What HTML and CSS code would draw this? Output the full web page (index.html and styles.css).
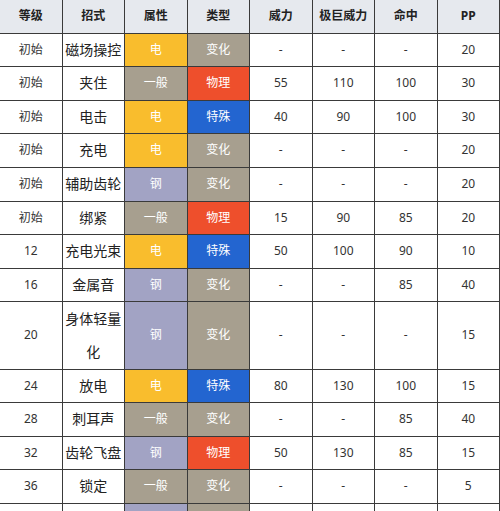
FILE: index.html
```html
<!DOCTYPE html>
<html lang="zh">
<head>
<meta charset="utf-8">
<link rel="stylesheet" href="styles.css">
</head>
<body>
<table class="moves">
  <thead>
    <tr><th>等级</th><th>招式</th><th>属性</th><th>类型</th><th>威力</th><th>极巨威力</th><th>命中</th><th>PP</th></tr>
  </thead>
  <tbody>
    <tr><td>初始</td><td class="name">磁场操控</td><td class="t-elec">电</td><td class="t-status">变化</td><td>-</td><td>-</td><td>-</td><td>20</td></tr>
    <tr><td>初始</td><td class="name">夹住</td><td class="t-normal">一般</td><td class="t-phys">物理</td><td>55</td><td>110</td><td>100</td><td>30</td></tr>
    <tr><td>初始</td><td class="name">电击</td><td class="t-elec">电</td><td class="t-spec">特殊</td><td>40</td><td>90</td><td>100</td><td>30</td></tr>
    <tr><td>初始</td><td class="name">充电</td><td class="t-elec">电</td><td class="t-status">变化</td><td>-</td><td>-</td><td>-</td><td>20</td></tr>
    <tr><td>初始</td><td class="name">辅助齿轮</td><td class="t-steel">钢</td><td class="t-status">变化</td><td>-</td><td>-</td><td>-</td><td>20</td></tr>
    <tr><td>初始</td><td class="name">绑紧</td><td class="t-normal">一般</td><td class="t-phys">物理</td><td>15</td><td>90</td><td>85</td><td>20</td></tr>
    <tr><td>12</td><td class="name">充电光束</td><td class="t-elec">电</td><td class="t-spec">特殊</td><td>50</td><td>100</td><td>90</td><td>10</td></tr>
    <tr><td>16</td><td class="name">金属音</td><td class="t-steel">钢</td><td class="t-status">变化</td><td>-</td><td>-</td><td>85</td><td>40</td></tr>
    <tr><td>20</td><td class="name wrap">身体轻量化</td><td class="t-steel">钢</td><td class="t-status">变化</td><td>-</td><td>-</td><td>-</td><td>15</td></tr>
    <tr><td>24</td><td class="name">放电</td><td class="t-elec">电</td><td class="t-spec">特殊</td><td>80</td><td>130</td><td>100</td><td>15</td></tr>
    <tr><td>28</td><td class="name">刺耳声</td><td class="t-normal">一般</td><td class="t-status">变化</td><td>-</td><td>-</td><td>85</td><td>40</td></tr>
    <tr><td>32</td><td class="name">齿轮飞盘</td><td class="t-steel">钢</td><td class="t-phys">物理</td><td>50</td><td>130</td><td>85</td><td>15</td></tr>
    <tr><td>36</td><td class="name">锁定</td><td class="t-normal">一般</td><td class="t-status">变化</td><td>-</td><td>-</td><td>-</td><td>5</td></tr>
    <tr><td>40</td><td class="name">铁壁</td><td class="t-steel">钢</td><td class="t-status">变化</td><td>-</td><td>-</td><td>-</td><td>15</td></tr>
  </tbody>
</table>
</body>
</html>
```

FILE: styles.css
```css
html, body {
  margin: 0;
  padding: 0;
  background: #ffffff;
}

.moves {
  border-collapse: collapse;
  table-layout: fixed;
  width: 501px;
  margin: -1px 0 0 -1px;
  font-family: "Noto Sans", "Noto Sans CJK SC", sans-serif;
  color: #333333;
}

.moves th,
.moves td {
  border: 1px solid #3a3a3a;
  padding: 0;
  text-align: center;
  vertical-align: middle;
  line-height: 32.6px;
  font-size: 12px;
}

.moves th {
  background: #e6e9ee;
  font-weight: bold;
  color: #222222;
  height: 32.6px;
}

.moves td.name {
  font-size: 14px;
  color: #222222;
}

.moves td.wrap {
  line-height: 33.1px;
}

.t-elec,
.t-normal,
.t-steel,
.t-phys,
.t-spec,
.t-status {
  color: #ffffff !important;
}

.t-elec { background: #f9bd2d; }
.t-normal { background: #a79f8f; }
.t-steel { background: #a2a3c4; }
.t-phys { background: #ee4f2c; }
.t-spec { background: #2365d0; }
.t-status { background: #a79f8f; }
```
